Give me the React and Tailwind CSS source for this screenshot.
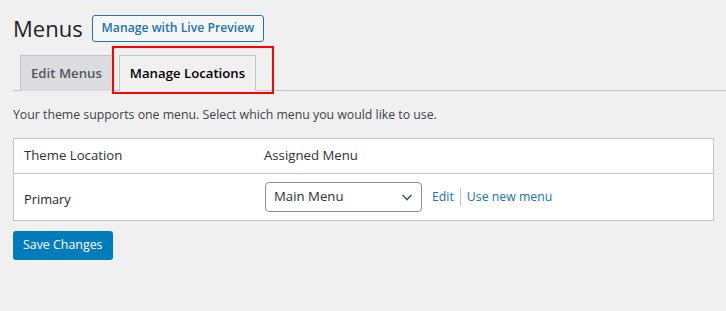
export default function App() {
  return (
    <div className="min-h-screen w-[726px] h-[311px] overflow-hidden bg-[#f0f0f1] pl-[13px] pr-3 pt-[14px] text-[12.3px] text-[#3c434a] font-['Open_Sans',sans-serif]">
      <div className="flex items-center gap-[9px]">
        <h1 className="text-[22px] font-normal leading-[29px] text-[#1d2327]">Menus</h1>
        <button className="h-[27px] px-[9px] border border-[#2271b1] rounded-[3px] bg-[#f6f7f7] text-[#2271b1] text-[12.2px] font-semibold leading-none">
          Manage with Live Preview
        </button>
      </div>

      <div className="relative mt-[12px] flex items-end gap-[6px] border-b border-[#c3c4c7] pl-[7px] -mr-3">
        <div className="h-[36px] px-[10px] flex items-center border border-b-0 border-[#c3c4c7] bg-[#dcdcde] text-[#50575e] text-[13.2px] font-semibold -mb-px">
          Edit Menus
        </div>
        <div className="h-[36px] px-[10px] flex items-center border border-b-0 border-[#c3c4c7] bg-[#f0f0f1] text-[#000] text-[13.2px] font-semibold -mb-px">
          Manage Locations
        </div>
        <div className="absolute left-[99px] top-[-9px] w-[162px] h-[48px] border-2 border-[#ff0000] pointer-events-none" />
      </div>

      <p className="mt-[15px] leading-[18px]">Your theme supports one menu. Select which menu you would like to use.</p>

      <div className="mt-[14px] w-[701px] bg-white border border-[#c3c4c7]">
        <div className="h-[35px] flex items-center border-b border-[#c3c4c7] text-[13.2px] text-[#2c3338]">
          <div className="w-[250px] pl-[10px]">Theme Location</div>
          <div>Assigned Menu</div>
        </div>
        <div className="h-[46px] flex items-center">
          <div className="w-[251px] pl-[10px] pt-[5px] font-medium text-[12.8px] text-[#1d2327]">Primary</div>
          <div className="flex items-center">
            <div className="w-[157px] h-[30px] flex items-center justify-between pl-[8px] pr-[6px] border border-[#8c8f94] rounded-[4px] bg-white text-[13.2px] text-[#2c3338]">
              <span>Main Menu</span>
              <svg width="16" height="16" viewBox="0 0 16 16" fill="none" stroke="#50575e" strokeWidth="1.6">
                <path d="M3.5 6l4.5 4.5L12.5 6" />
              </svg>
            </div>
            <a className="ml-[10px] text-[#2271b1]">Edit</a>
            <span className="mx-[6px] w-px h-[18px] bg-[#c3c4c7]" />
            <a className="text-[#2271b1]">Use new menu</a>
          </div>
        </div>
      </div>

      <button className="mt-[10px] h-[29px] px-[10px] rounded-[3px] bg-[#007cba] text-white text-[12.4px] leading-none">
        Save Changes
      </button>
    </div>
  );
}
